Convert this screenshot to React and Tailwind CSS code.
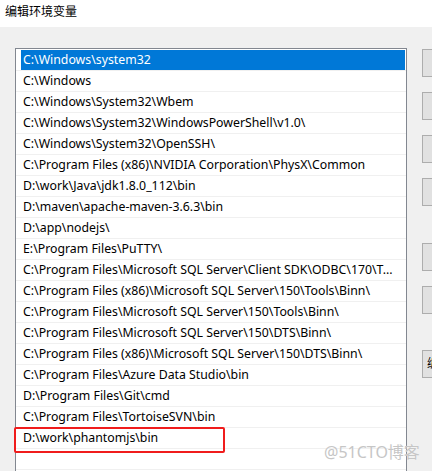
import React from 'react';

const paths = [
  'C:\\Windows\\system32',
  'C:\\Windows',
  'C:\\Windows\\System32\\Wbem',
  'C:\\Windows\\System32\\WindowsPowerShell\\v1.0\\',
  'C:\\Windows\\System32\\OpenSSH\\',
  'C:\\Program Files (x86)\\NVIDIA Corporation\\PhysX\\Common',
  'D:\\work\\Java\\jdk1.8.0_112\\bin',
  'D:\\maven\\apache-maven-3.6.3\\bin',
  'D:\\app\\nodejs\\',
  'E:\\Program Files\\PuTTY\\',
  'C:\\Program Files\\Microsoft SQL Server\\Client SDK\\ODBC\\170\\T...',
  'C:\\Program Files (x86)\\Microsoft SQL Server\\150\\Tools\\Binn\\',
  'C:\\Program Files\\Microsoft SQL Server\\150\\Tools\\Binn\\',
  'C:\\Program Files\\Microsoft SQL Server\\150\\DTS\\Binn\\',
  'C:\\Program Files (x86)\\Microsoft SQL Server\\150\\DTS\\Binn\\',
  'C:\\Program Files\\Azure Data Studio\\bin',
  'D:\\Program Files\\Git\\cmd',
  'C:\\Program Files\\TortoiseSVN\\bin',
  'D:\\work\\phantomjs\\bin',
  '',
];

// 오른쪽 버튼 (잘려서 보임)
const buttons = [
  { top: 'mt-[1px]', label: '' },
  { top: 'mt-[15px]', label: '' },
  { top: 'mt-[15px]', label: '' },
  { top: 'mt-[15px]', label: '' },
  { top: 'mt-[37px]', label: '' },
  { top: 'mt-[15px]', label: '' },
  { top: 'mt-[36px]', label: '编' },
];

const App = () => {
  return (
    <div
      className="relative w-[432px] h-[471px] overflow-hidden bg-[#f0f0f0]"
      style={{ fontFamily: '"Noto Sans", "Noto Sans CJK SC", sans-serif' }}
    >
      {/* Title */}
      <div className="h-[27px] bg-white pl-[5px] pt-[3px] text-[12px] leading-[17px] text-black">
        编辑环境变量
      </div>

      {/* Body */}
      <div className="flex pt-[21px] pl-[15px]">
        {/* List */}
        <div className="w-[392px] h-[440px] shrink-0 bg-white border-l border-t border-r border-[#828790] pt-[1px]">
          {paths.map((p, i) => (
            <div
              key={i}
              className="h-[21px] border-b border-[#f0f0f0] pr-[1px]"
            >
              <div
                className={`h-[20px] ml-[5px] pl-[2px] text-[12.3px] leading-[20px] whitespace-nowrap overflow-hidden ${
                  i === 0 ? 'bg-[#0078d7] text-white' : 'text-black'
                }`}
              >
                {p}
              </div>
            </div>
          ))}
        </div>

        {/* Buttons */}
        <div className="flex flex-col pl-[15px]">
          {buttons.map((b, i) => (
            <div
              key={i}
              className={`${b.top} w-[75px] h-[28px] shrink-0 bg-[#e1e1e1] border border-[#adadad] pl-[4px] text-[12px] leading-[26px] text-black`}
            >
              {b.label}
            </div>
          ))}
        </div>
      </div>

      {/* Red highlight box */}
      <div className="absolute left-[14px] top-[427px] w-[211px] h-[26px] border-2 border-[#f01c1c] rounded-[2px]" />

      {/* Watermark */}
      <div
        className="absolute left-[324px] top-[443px] text-[16px] leading-[18px] text-[#c6c6c6]"
        style={{ textShadow: '0 0 1px #fff' }}
      >
        @51CTO博客
      </div>
    </div>
  );
};

export default App;
